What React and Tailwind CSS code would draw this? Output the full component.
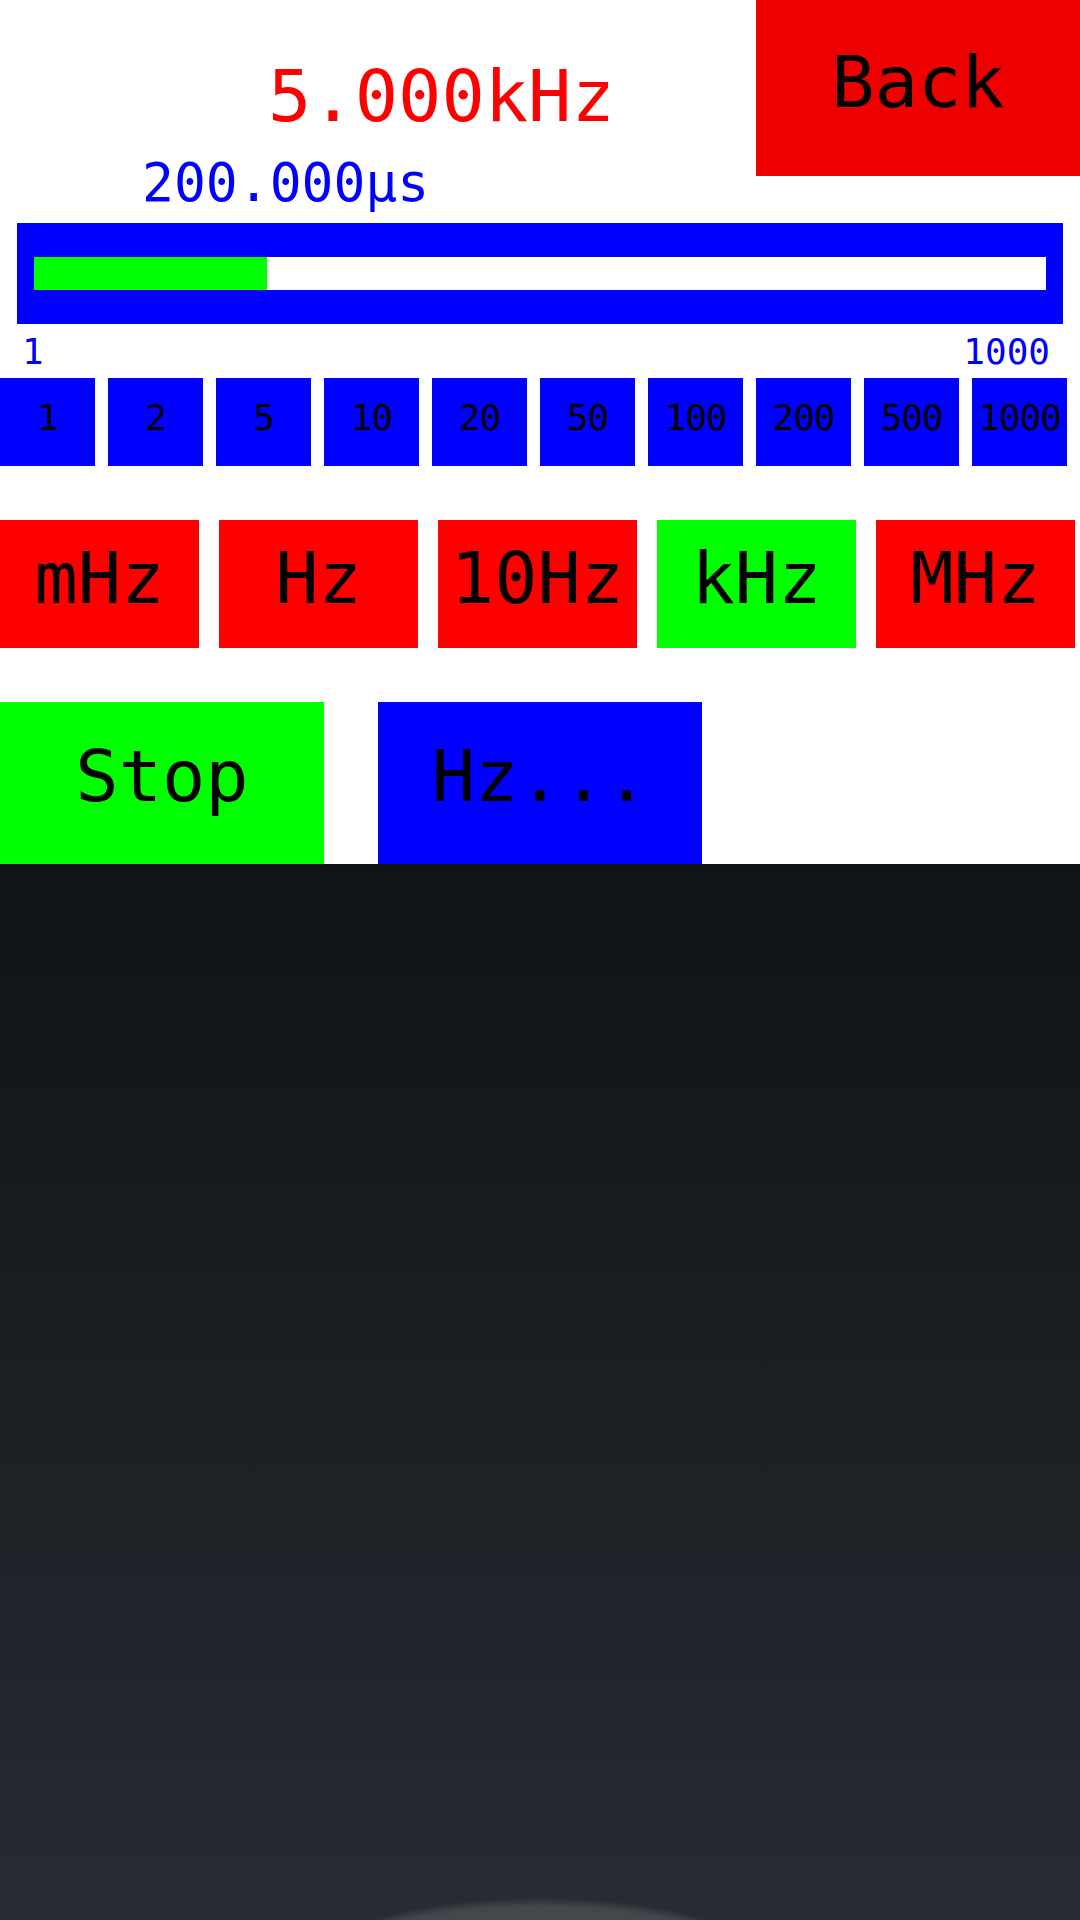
const steps = ["1", "2", "5", "10", "20", "50", "100", "200", "500", "1000"];

const units = [
  { label: "mHz", active: false },
  { label: "Hz", active: false },
  { label: "10Hz", active: false },
  { label: "kHz", active: true },
  { label: "MHz", active: false },
];

const mono = { fontFamily: '"DejaVu Sans Mono", "Liberation Mono", monospace' };

const App = () => {
  return (
    <div className="w-[1080px] min-h-[1920px] flex flex-col bg-white text-black" style={mono}>
      <div className="h-[223px] flex items-start">
        <div className="flex-1 flex flex-col">
          <div className="pl-[268px] pt-[60px] text-[72px] leading-none text-[#ff0000]">5.000kHz</div>
          <div className="pl-[142px] mt-[24px] text-[53px] leading-none text-[#0000ff]">200.000µs</div>
        </div>
        <button className="w-[324px] h-[176px] bg-[#ee0000] flex justify-center pt-[46px] text-[72px] leading-none">
          Back
        </button>
      </div>

      <div className="mx-[17px] h-[101px] bg-[#0000ff] px-[17px] py-[34px]">
        <div className="h-[33px] bg-white flex">
          <div className="w-[233px] h-full bg-[#00ff00]" />
        </div>
      </div>

      <div className="mt-[10px] flex justify-between pl-[22px] pr-[30px] text-[36px] leading-none text-[#0000ff]">
        <span>1</span>
        <span>1000</span>
      </div>

      <div className="mt-[8px] flex gap-[13px]">
        {steps.map((s) => (
          <button
            key={s}
            className="w-[95px] h-[88px] bg-[#0000ff] flex justify-center pt-[22px] text-[36px] leading-none tracking-[-1px]"
          >
            {s}
          </button>
        ))}
      </div>

      <div className="mt-[54px] flex gap-[20px]">
        {units.map((u) => (
          <button
            key={u.label}
            className={
              "w-[199px] h-[128px] flex justify-center pt-[22px] text-[72px] leading-none " +
              (u.active ? "bg-[#00ff00]" : "bg-[#ff0000]")
            }
          >
            {u.label}
          </button>
        ))}
      </div>

      <div className="mt-[54px] flex gap-[54px]">
        <button className="w-[324px] h-[162px] bg-[#00ff00] flex justify-center pt-[38px] text-[72px] leading-none">
          Stop
        </button>
        <button className="w-[324px] h-[162px] bg-[#0000ff] flex justify-center pt-[38px] text-[72px] leading-none">
          Hz...
        </button>
      </div>

      <div className="relative flex-1 overflow-hidden bg-gradient-to-b from-[#111416] via-[#1c1f23] to-[#272b34]">
        <div className="absolute left-1/2 -translate-x-1/2 bottom-[-122px] w-[460px] h-[140px] rounded-[50%] bg-[#44484c] blur-[3px]" />
      </div>
    </div>
  );
};

export default App;
